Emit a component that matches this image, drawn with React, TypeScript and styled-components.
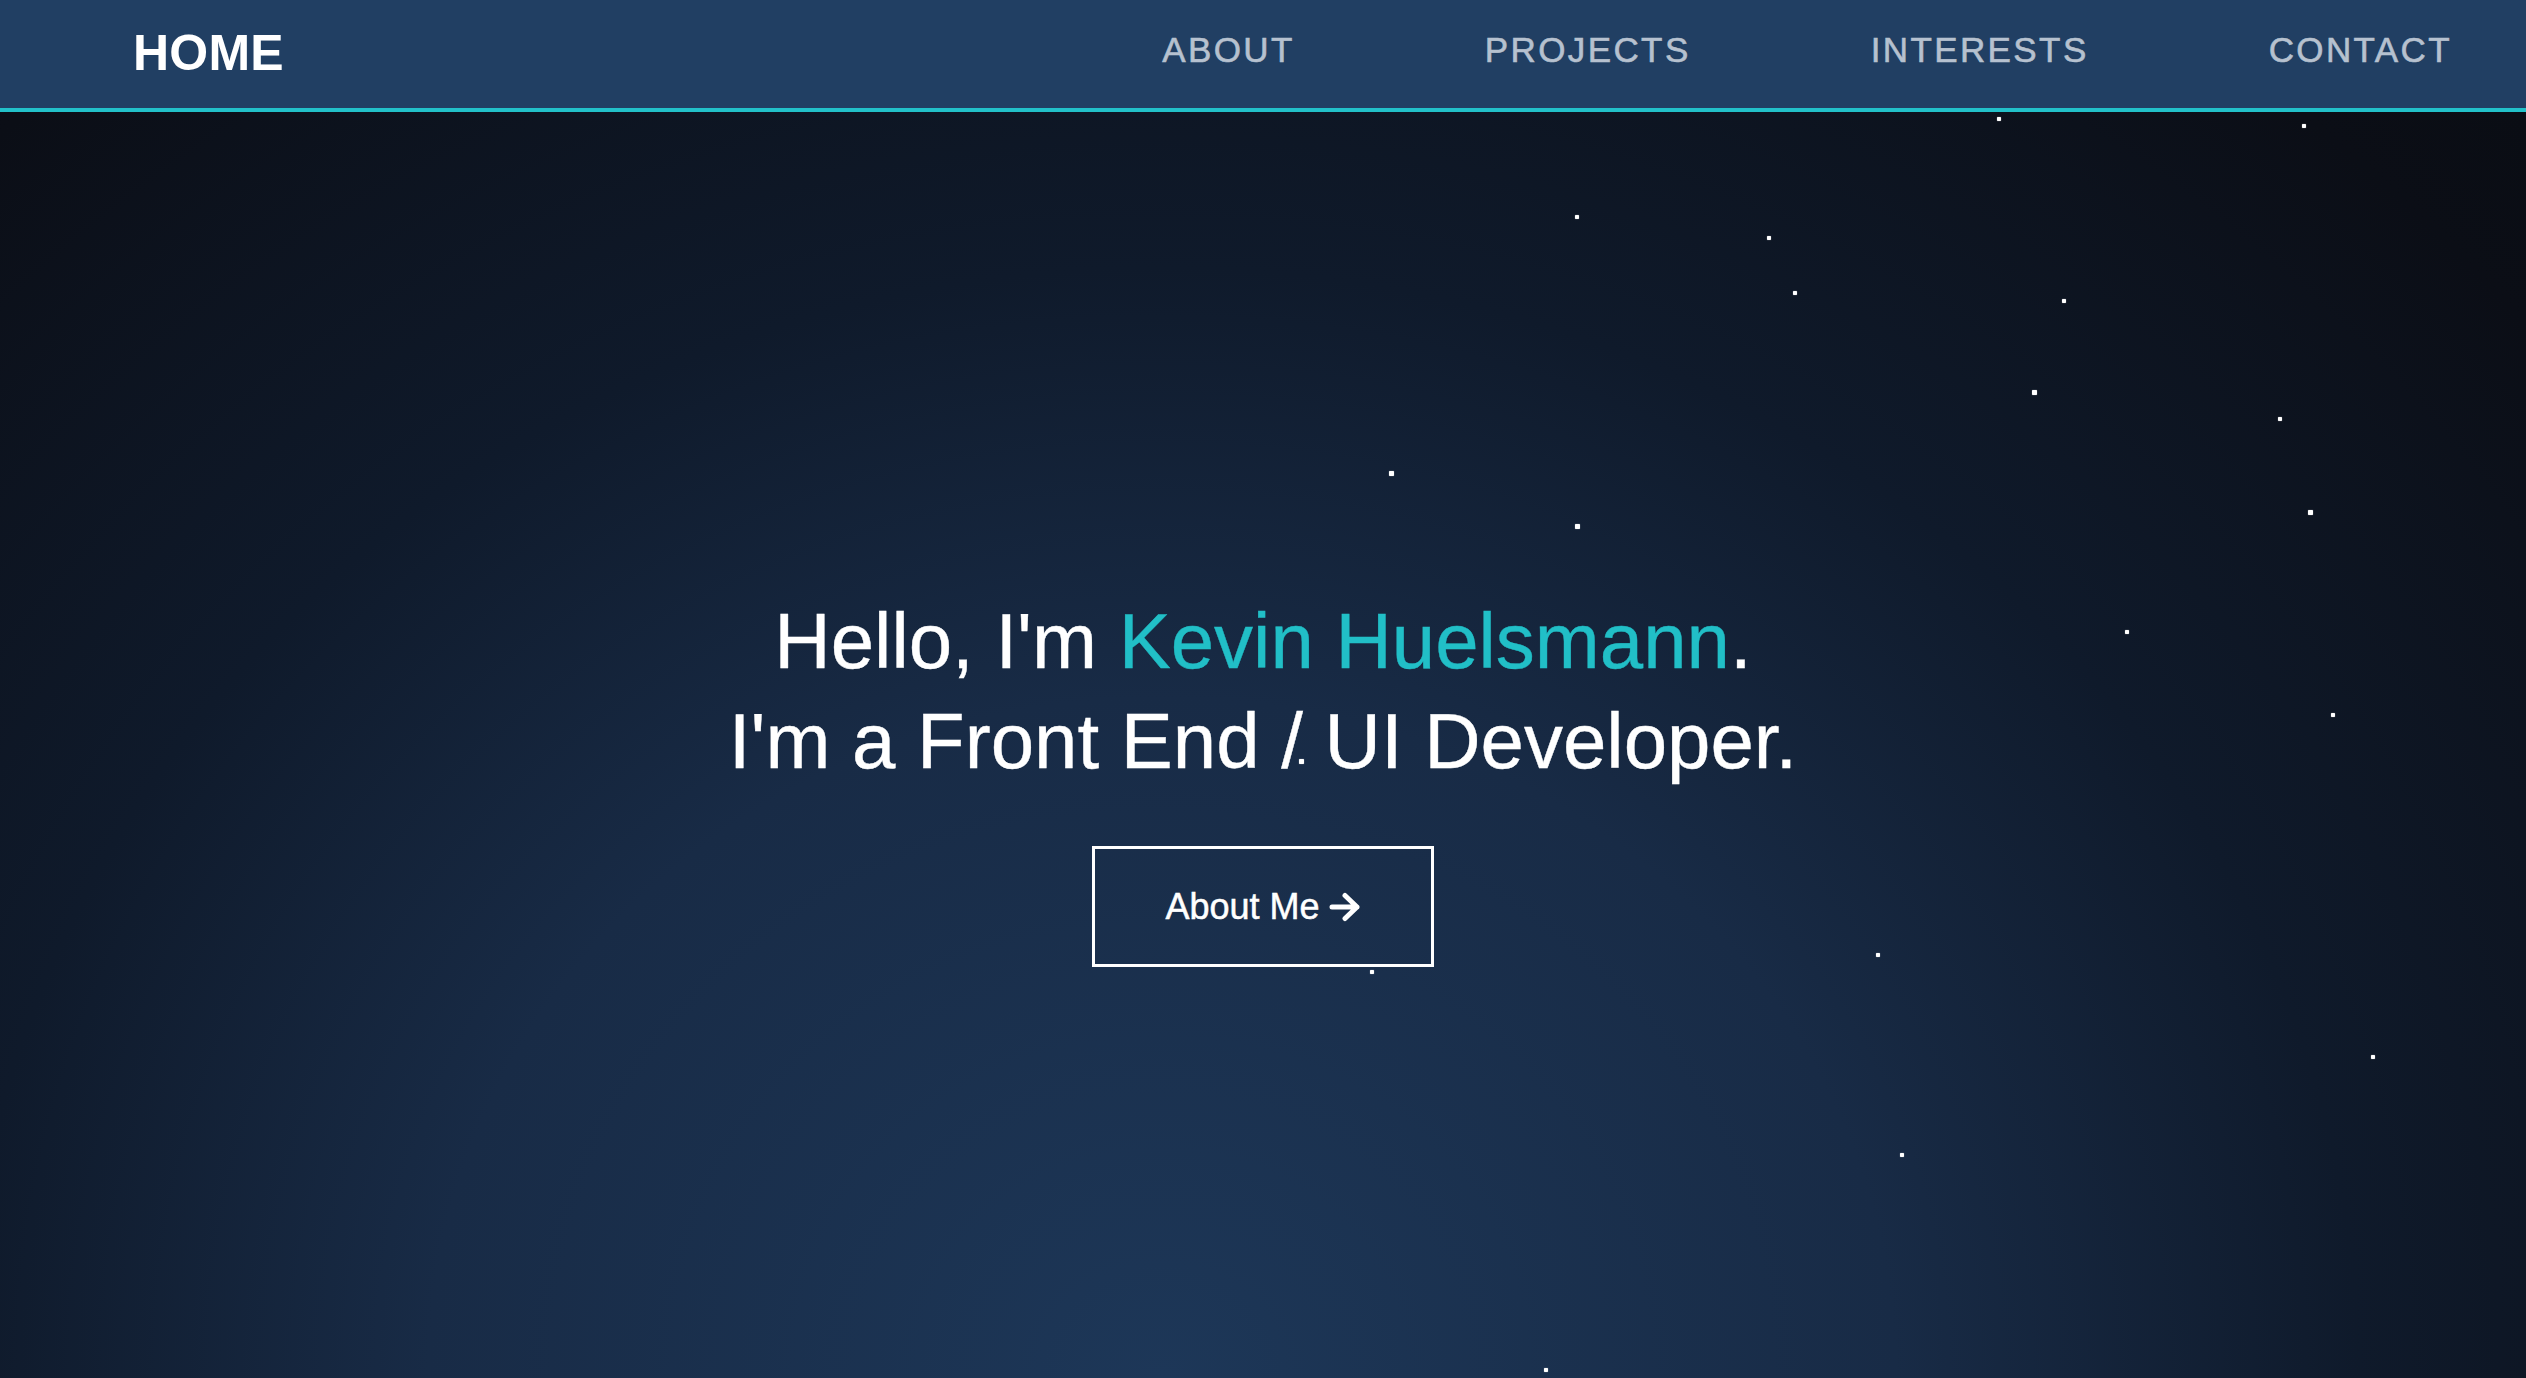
import styled, { createGlobalStyle } from "styled-components";

const GlobalStyle = createGlobalStyle`
  html, body {
    margin: 0;
    padding: 0;
    background-color: #0a0d14;
    overflow: hidden;
  }

  body {
    font-family: "Liberation Sans", Arial, sans-serif;
  }

  * {
    box-sizing: border-box;
  }
`;

const Page = styled.div`
  display: flex;
  flex-direction: column;
  height: 100vh;
  overflow: hidden;
`;

/* 상단 네비게이션 바 */
const Nav = styled.nav`
  display: flex;
  align-items: center;
  justify-content: space-between;
  flex-shrink: 0;
  height: 112px;
  padding: 0 74px 3px 133px;
  background-color: #213f63;
  border-bottom: 4px solid #22c1c9;
`;

const Brand = styled.a`
  font-size: 50px;
  font-weight: 700;
  color: #ffffff;
  text-decoration: none;
  letter-spacing: 0.2px;
`;

const NavList = styled.ul`
  display: flex;
  align-items: center;
  gap: 180px;
  margin: 0 0 6px;
  padding: 0;
  list-style: none;

  li:first-child {
    margin-right: 10px;
  }
`;

const NavLink = styled.a`
  font-size: 35px;
  letter-spacing: 2.4px;
  color: #b6c1cf;
  text-decoration: none;
  text-transform: uppercase;
  -webkit-text-stroke: 0.6px #b6c1cf;
`;

const Hero = styled.section`
  position: relative;
  flex: 1;
  display: flex;
  flex-direction: column;
  align-items: center;
  padding-top: 479px;
  overflow: hidden;
  background: radial-gradient(
    ellipse at 46% 100%,
    #1d3758 0%,
    #182b46 38%,
    #0f1a2b 62%,
    #0b0e16 92%,
    #0a0d14 100%
  );
`;

/* 별 레이어: 캔버스 위 좌표 자체가 내용 */
const StarField = styled.div`
  position: absolute;
  inset: 0;
  pointer-events: none;
`;

const Star = styled.span<{ $size: number }>`
  position: absolute;
  width: ${(props) => props.$size}px;
  height: ${(props) => props.$size}px;
  border-radius: 1px;
  background-color: #ffffff;
  box-shadow: 0 0 1px rgba(255, 255, 255, 0.8);
`;

const Headline = styled.h1`
  position: relative;
  margin: 0;
  font-size: 78px;
  font-weight: 400;
  line-height: 100px;
  color: #ffffff;
  text-align: center;
  -webkit-text-stroke: 0.4px currentColor;
`;

const Highlight = styled.span`
  color: #21bfc7;
`;

const CtaButton = styled.a`
  position: relative;
  display: inline-flex;
  align-items: center;
  gap: 9px;
  height: 121px;
  margin-top: 55px;
  padding: 0 70px;
  border: 3px solid #ffffff;
  font-size: 36px;
  color: #ffffff;
  text-decoration: none;
  cursor: pointer;
  -webkit-text-stroke: 0.5px #ffffff;

  svg {
    display: block;
  }
`;

const stars: [number, number, number][] = [
  [1999, 119, 4],
  [2304, 126, 4],
  [1577, 217, 4],
  [1769, 238, 4],
  [1795, 293, 4],
  [2064, 301, 4],
  [2034, 392, 5],
  [2280, 419, 4],
  [1391, 473, 5],
  [1577, 526, 5],
  [2310, 512, 5],
  [2127, 632, 4],
  [2333, 715, 4],
  [1301, 761, 5],
  [1878, 955, 4],
  [1372, 972, 4],
  [2373, 1057, 4],
  [1902, 1155, 4],
  [1546, 1370, 4],
];

const NAV_HEIGHT = 112;

function ArrowIcon() {
  return (
    <svg width="32" height="30" viewBox="0 0 32 30" fill="none">
      <path
        d="M3 15H28M16 3.5L28 15L16 26.5"
        stroke="#ffffff"
        strokeWidth="5"
        strokeLinecap="round"
        strokeLinejoin="round"
      />
    </svg>
  );
}

function App() {
  const links = ["About", "Projects", "Interests", "Contact"];

  return (
    <>
      <GlobalStyle />
      <Page>
        <Nav>
          <Brand href="#home">HOME</Brand>
          <NavList>
            {links.map((link) => (
              <li key={link}>
                <NavLink href={`#${link.toLowerCase()}`}>{link}</NavLink>
              </li>
            ))}
          </NavList>
        </Nav>

        <Hero>
          <StarField>
            {stars.map(([x, y, size], i) => (
              <Star
                key={i}
                $size={size}
                style={{ left: x - size / 2, top: y - NAV_HEIGHT - size / 2 }}
              />
            ))}
          </StarField>

          <Headline>
            Hello, I'm <Highlight>Kevin Huelsmann</Highlight>.
            <br />
            I'm a Front End / UI Developer.
          </Headline>

          <CtaButton href="#about">
            About Me
            <ArrowIcon />
          </CtaButton>
        </Hero>
      </Page>
    </>
  );
}

export default App;
